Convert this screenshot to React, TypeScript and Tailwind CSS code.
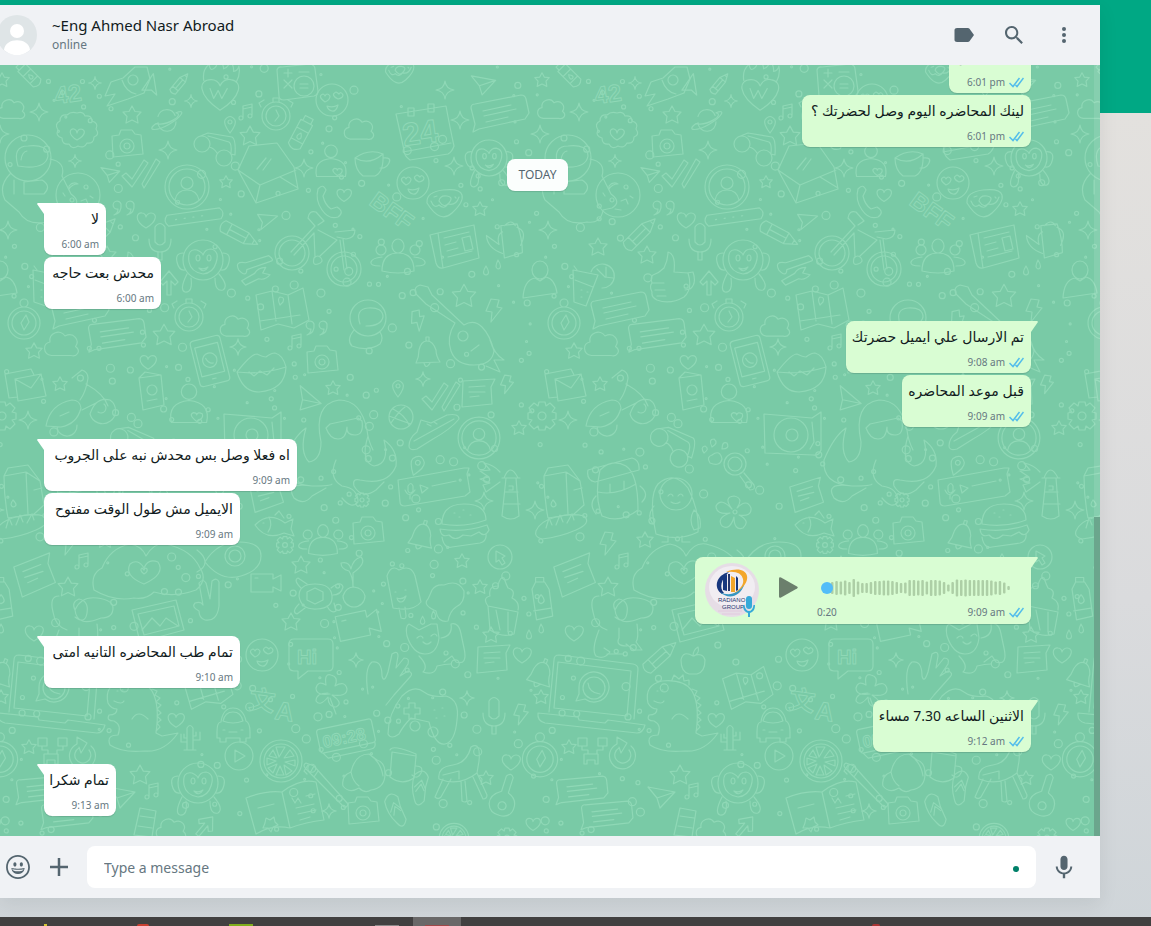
import React from 'react';

interface Message {
  id: number;
  text?: string;
  time: string;
  sent: boolean;
  tail?: boolean;
  width: string;
}

interface BubbleProps {
  message: Message;
  children?: React.ReactNode;
}

const earlier: Message[] = [
  { id: 1, text: 'مساء الخير', time: '6:01 pm', sent: true, width: 'w-[82px]' },
  { id: 2, text: 'لينك المحاضره اليوم وصل لحضرتك ؟', time: '6:01 pm', sent: true, width: 'w-[229px]' },
];

const today: Message[] = [
  { id: 3, text: 'لا', time: '6:00 am', sent: false, tail: true, width: 'w-[62px]' },
  { id: 4, text: 'محدش بعت حاجه', time: '6:00 am', sent: false, width: 'w-[117px]' },
  { id: 5, text: 'تم الارسال علي ايميل حضرتك', time: '9:08 am', sent: true, tail: true, width: 'w-[185px]' },
  { id: 6, text: 'قبل موعد المحاضره', time: '9:09 am', sent: true, width: 'w-[129px]' },
  { id: 7, text: 'اه فعلا وصل بس محدش نبه على الجروب', time: '9:09 am', sent: false, tail: true, width: 'w-[253px]' },
  { id: 8, text: 'الايميل مش طول الوقت مفتوح', time: '9:09 am', sent: false, width: 'w-[196px]' },
  { id: 9, time: '9:09 am', sent: true, tail: true, width: 'w-[336px]' },
  { id: 10, text: 'تمام طب المحاضره التانيه امتى', time: '9:10 am', sent: false, tail: true, width: 'w-[196px]' },
  { id: 11, text: 'الاثنين الساعه 7.30 مساء', time: '9:12 am', sent: true, tail: true, width: 'w-[158px]' },
  { id: 12, text: 'تمام شكرا', time: '9:13 am', sent: false, tail: true, width: 'w-[72px]' },
];

const shapes: Record<string, string> = {
  star: 'M0-9l3 5.500 6 .5-4 4.500 1 6.500-6-3-6 3 1-6.500-4-4.500 6-.5z',
  sparkle: 'M0-9q1 8 9 9q-8 1-9 9q-1-8-9-9q8-1 9-9z',
  heart: 'M0 8c-13-8-9-16-4-15 3 0 4 3 4 4 0-1 2-4 5-4 6 0 7 8-5 15z',
  heartW: 'M0 18c-26-18-24-34-10-34 6 0 9 4 10 7 2-4 6-8 12-7 14 2 12 19-12 34zM-11-6l4 11 5-9 4 9 6-11M-18-15q-2-12 6-18q1 9 6 4q4-3 2-10q8 4 8 11q6-2 7-9q5 6 4 12q5-1 6-6q2 9-3 18',
  cloud: 'M-9 7c-6-1-6-8-1-9-1-6 7-9 10-4 6-3 10 3 7 7 4 3 1 7-3 6z',
  planet: 'M-10-4a10 10 0 0 1 19-1M-10 3a10 10 0 0 0 20-1M-12 4c-12 8 0 9 14 1s20-18 8-13C20-6 0 7-12 4z',
  camera: 'M-15-8l7-1 2-5h11l3 4 6 1 2 19-30 3zM-7 2a7 7 0 1 0 14 0a7 7 0 1 0-14 0M-3 2a3 3 0 1 0 6 0a3 3 0 1 0-6 0',
  badge: 'M0-20q6-2 8 3q7-1 7 5q7 2 4 8q4 6-2 8q0 7-7 6q-3 6-9 3q-6 4-9-2q-7 1-7-6q-7-2-4-8q-4-6 2-9q0-7 7-6q4-4 10-2zM0 7c-10-6-7-12-3-11q3 1 3 4q1-4 4-4c5 1 5 6-4 11z',
  helmet: 'M-23 0a23 23 0 1 0 46 0a23 23 0 1 0-46 0M-10 8q-6-20 10-20q20-2 20 10q-2 12-22 11zM-7 2q1-8 6-9M-18 16q-12 12-5 26l14 12q8 14 28 10q14 2 16-12l9-2q10-6-1-14l-9-18q4-14-12-17M-4 24l18-2q10 6 2 14h-20zM-14 22v14',
  head: 'M-18 0a18 18 0 1 0 36 0a18 18 0 1 0-36 0M-8 6q-5-15 8-16q15-1 15 9q-2 9-17 9M-14 12q-8 10-2 16 16 6 28-2 4-6 0-12',
  ring: 'M-22 0a22 22 0 1 0 44 0a22 22 0 1 0-44 0M-18 0a18 18 0 1 0 36 0a18 18 0 1 0-36 0M-6-4a6 6 0 1 0 12 0a6 6 0 1 0-12 0M-12 13q2-10 12-10t12 10',
  cookie: 'M-22 0a22 22 0 1 0 44 0a22 22 0 1 0-44 0M-9-9q4-5 9-2q-6 0-9 5zM6-8a2 2 0 1 0 4 0a2 2 0 1 0-4 0M-8 5a2 2 0 1 0 4 0a2 2 0 1 0-4 0M3 6l5-2 2 5M-3 14l6 1M12 1l3 2M-15-2l2 3',
  glasses: 'M-20-4a8 8 0 1 0 16 0a8 8 0 1 0-16 0M2 10a8 8 0 1 0 16 0a8 8 0 1 0-16 0M-5-1q5 1 8 6M-16-11l10-4 24 4q4 2 3 18l-4-1M-6-12l21 6q3 2 2 11',
  pin: 'M0 9q-7-9-5-13q5-7 10 0q2 4-5 13zM-2-2a2 2 0 1 0 4 0a2 2 0 1 0-4 0',
  music: 'M-5 6v-12l9-2v11M-5-3l9-2M-9 6a2 2 0 1 0 4 0a2 2 0 1 0-4 0M0 4a2 2 0 1 0 4 0a2 2 0 1 0-4 0',
  watch: 'M-14 0a14 14 0 1 0 28 0a14 14 0 1 0-28 0M-10 0a10 10 0 1 0 20 0a10 10 0 1 0-20 0M-3-14v-4h6v4M-15-9l-2-4 5-3M15-9l2-4-5-3M0-6l3 6-4 5',
  emoji: 'M-16 0a16 16 0 1 0 32 0a16 16 0 1 0-32 0M-7 2q-8-6-2-8q2 1 2 2q2-4 5 0q0 4-5 6zM6-1q-8-4-2-7q2 1 3 2q2-3 4 1q0 3-5 4zM-5 6q6 2 11-1q-2 7-6 6t-5-5z',
  calc: 'M-19-12q1-4 5-3l28-3q5 1 5 5l3 22q0 4-4 5l-30 4q-5 0-5-4zM-12-2l8 8M-4-2l-8 8M-12-9h8M-8-13v8M3-10h10M-2 4a10 10 0 1 0 20 0a10 10 0 1 0-20 0M4 2h8M4 6h8',
  tube: 'M-6-13h12v24q-6 6-12 0zM-6-5h12M-6 6h12M-4-13v-5h8v5M0-2q-4 5 0 6q4-1 0-6z',
  envelope: 'M-27-2l11-24 28-3 17 24 4 22-42 14zM-27-2l22 15 36-15M-9 30l4-17M33 16l-18-11M-8-3l9-11M-2-2l8-11',
  person: 'M-7-13a7 7 0 1 0 14 0a7 7 0 1 0-14 0M-16 15q-4-18 16-20q20 2 16 20zM7 14q-8-6-3-8q3 0 3 2q1-3 5-1q2 4-5 7z',
  phone: 'M-13-11q5-6 8 1l-3 6q2 9 8 13l6-2q8 5 1 10q-9 3-16-7t-4-21z',
  cup: 'M-15-6q14-10 28-4q1 18-8 22h-12q-8-6-8-18zM-15-6q14 8 28-4M13-6q9-1 6 5t-9 5',
  plane: 'M-13-9l27 5-15 16-3-10zM-4 2l18-6',
  arrow: 'M-13-7l25 2-21 17 2-9z',
  checks: 'M-18 1l4-3 6 6 12-19 4 3-16 24zM2 9l14-25 4 3L4 13z',
  quotes: 'M-4-4a4 4 0 1 0-3 5q0 4-4 6q8-2 7-11M9-4a4 4 0 1 0-3 5q0 4-4 6q8-2 7-11',
  bar: 'M-24-5h48q5 5 0 10h-48q-5-5 0-10zM-17 0h1M-9 0h1M-1 0h1M7 0h1',
  pencil: 'M-19-6h26l13 6-13 6h-26q-5-6 0-12zM-12-6v12M7-6v12M-12 0h19M15-2v4',
  mic: 'M-5-13q5-7 10 0v15q-5 6-10 0zM-11-1q0 13 11 13t11-13M-2 12v8h4v-8',
  monkey: 'M-20 0a20 20 0 1 0 40 0a20 20 0 1 0-40 0M-20-7q-8 0-6 9t8 8M20-7q8 0 6 9t-8 8M-14 2q-2-14 8-12q6 3 6 5q2-6 8-6q9 2 5 14q-3 10-13 11q-12-2-14-12zM-7-2a2 3 0 1 0 4 0a2 3 0 1 0-4 0M4-2a2 3 0 1 0 4 0a2 3 0 1 0-4 0M-4 8q5 2 9-1q-4 7-9 1M-16 14q-8 16-2 18q8 1 6-14M16 14q10 12 4 16q-8 2-8-12',
  spoon: 'M-18 3q-3-10 8-6l24-3q6 6 0 6l-24 4q-2 8-8-1zM-17 14l14-5q4-5 12-4l-4 5 7 3q-6 5-12 2l-14 4z',
  bike: 'M-43 7a17 17 0 1 0 34 0a17 17 0 1 0-34 0M-39 7a13 13 0 1 0 26 0a13 13 0 1 0-26 0M9 23a17 17 0 1 0 34 0a17 17 0 1 0-34 0M13 23a13 13 0 1 0 26 0a13 13 0 1 0-26 0M-27 6L-3-20l-7-8q1-8 8-6l8 9-6 4M-24 9L-4-13l1 24M0-16L19-6l-17 16M22-6l4 30M25-7l4 30M17-14l20-2q0 8-9 9l-9-2M-4 12q4-4 7 0t-3 6-4-6',
  donut: 'M-18 0q-1-11 16-13t19 5-10 18-25-10zM-6-2q1-6 8-5t2 7-10-2M-14-2q3 8 8 4q5 5 9-1q8 2 11-7M-11-6l3-1M10-6l1 1',
  news: 'M-18-12l36-8 5 33-36 10zM-18-12l-8 2 6 28q2 6 7 5M-12-7l25-6M-11 0l11-3M-9 6l11-3M-8 12l24-6M6-7l8-2 3 13-8 2z',
  can: 'M-8-16l18-2q6 16 6 32l-20 6zM-6-9q-7 3-4 14l-14-10q1 14 18 20M10-14q12 4 4 20M-4-16q8-8 12 0',
  people: 'M-6-10a6 7 0 1 0 12 0a6 7 0 1 0-12 0M-16 15q0-18 16-18t16 18q-16 4-32 0M-22-6a5 5 0 1 0 10 0a5 5 0 1 0-10 0M12-6a5 5 0 1 0 10 0a5 5 0 1 0-10 0M-18 10q-10 0-9-4t11-5M18 10q10 0 9-4t-11-5',
  guitar: 'M-40-38q-3-7 4-9l8 2 4 8L8-7q10-6 18 2t12 24q-2 14-20 14t-23-14 4-28L-30-28zM2 4a5 5 0 1 0 10 0a5 5 0 1 0-10 0M15 19l8-6M34 8q4 14 14 20l-10 0 6 12-14-6',
  ukulele: 'M-3-22q4-5 7 0l-1 16q10 4 9 14t-12 10-13-9 9-15zM-4 8a4 4 0 1 0 8 0a4 4 0 1 0-8 0',
  bolt: 'M-3-11l8 1-2 7 5 1-11 14 1-10-6-1z',
  bell: 'M-11 9q3-6 3-13 2-9 8-9t9 9q0 6 4 12l-24 1M-3 9q2 7 6 0M-1-13v-4h3v4',
  calendar: 'M-26-18l50-8q4 22 8 40-2 6-6 8l-38 6q-6-4-6-10zM-14-24h6v8h-6zM6-28h6v8h-6zM-19 20l48-9',
  bubble: 'M-24-10l46-9q4 0 5 4l3 14-4 6-46 10-6 3 2-8-4-16q0-4 4-4zM-16-3l28-6M-15 2l32-7M-13 8l22-5',
  note: 'M-15-11l32-2-4 8 1 17-30 3zM-9-5l16-1M-9 0h16M-8 5l9-1',
  thumb: 'M-16 0q6-2 11-7 4-8 4-16 8 2 6 20l14 1q5 16-4 24-14 8-27 3-6-3-5-8 -3-6 0-9-2-6 1-8zM-17 8h12M-14 15h10M-12 21h9M18-2l6-1q4 12-3 17l-5 1',
  drink: 'M-16-12l25 5-12 31-12-4zM-14-2l18 7M-12-12l-3-4M2-10a12 12 0 1 1 11 16M8-13l8 8M17-15v10M24-4l-8-1M-8 8h1M-2 10h1M-8 15h1',
  user: 'M-8-12a8 9 0 1 0 16 0a8 9 0 1 0-16 0M-17 16q1-18 12-20l5 3 6-4q9 2 11 16z',
  compass: 'M-16 2a16 16 0 1 0 32 0a16 16 0 1 0-32 0M-12 2a12 12 0 1 0 24 0a12 12 0 1 0-24 0M-4-18a4 4 0 1 0 8 0a4 4 0 1 0-8 0M2-6l3 7-5 8-3-7z',
  uparrow: 'M-9-1l9-11 9 11-3 3-4-4v14h-4v-14l-4 4z',
  tablet: 'M-17-22q0-4 4-4h26q4 0 4 4v44q0 4-4 4h-26q-4 0-4-4zM-13-18h26v33h-26zM-8-1a8 8 0 1 0 16 0a8 8 0 1 0-16 0M-4-4q2 7 7 7M-2 20h4',
  map: 'M-24-16l16-4 16 4 15-7 6 32-15 8-16-4-17 6zM-8-20l4 30M8-16l4 29M0-6q-3-6 0-8q5 0 3 5zM-20 10l40-6',
  lips: 'M-26 2q14-18 20-18 6 3 9 3 5-4 9-4 8 2 11 14-25 8-49 5zM-26 2q6 20 22 20 26-2 27-25M-14 2l5 4 6-5 7 4 7-7',
  mail: 'M-20-12l26-5 3 6M-20-12l4 24 8-1M-10-7l26-5 5 22-28 5zM-10-7l16 9 10-14',
  rocket: 'M-28 18q4-22 26-26 8 0 9 8-4 16-20 19zM-14 8l9-4M-17 19a10 10 0 0 0 20-2M8 2l14-7M-2-30l10-8q6 2 6 8-2 14-8 22M12-24q18 10 22 22M16 6a13 13 0 1 0 20-14q-14-4-20 14M24 4a5 5 0 1 0 6-8',
  shuttle: 'M-17 18l8-12-10 2 6-14 12-4 12-11 12 0 3 12-6 14-16 6zM-2-8q4 12 14 14M4-8a5 5 0 1 0 10 0a5 5 0 1 0-10 0',
  passport: 'M-12-14l22-3 3 30-21 5zM-12-14l6-6 16 3M-4-2a5 5 0 1 0 10 0a5 5 0 1 0-10 0M-4 9l10-2',
  gear: 'M-3-14h6l1 4 4-3 5 5-3 4 4 1v6l-4 1 3 4-5 5-4-3-1 4h-6l-1-4-4 3-5-5 3-4-4-1v-6l4-1-3-4 5-5 4 3zM-4 0a4 4 0 1 0 8 0a4 4 0 1 0-8 0',
  turntable: 'M-28-18l48 4 9-6 0 38q-2 6-8 5l-48-2zM-18 3a17 17 0 1 0 34 0a17 17 0 1 0-34 0M-6 3a6 6 0 1 0 12 0a6 6 0 1 0-12 0M20-10l2 20-4 7',
  octopus: 'M-21-4q-8-38 18-42 22 0 28 30 1 10 6 20M-16-18l4-4 28-6 4 3q2 14-7 14t-8-8q-1 12-9 12t-12-11zM-21-4q0 18-12 20-10-10-3-34-12 8-22 32-2 24 28 26 20 0 20-2M26-10q-8 26 6 30 16-2 10-26 14 10 12 26-8 20-36 14-8-2-6 6 8 14 22 4l8-8M-30 40q-28-4-18 12 10 8 18-2l14-8M-6 14q-8 18 6 26 16 2 16 16-6 8-16-4',
  lighthouse: 'M-8 26l4-38h10l3 38q-8 6-17 0zM-6 14h16M-5 2h13M-6-12q6-16 14 0M-8-12h18M-1-4h4v4h-4M-10-8l-14 10-3-7 7-2-10-4 9-2-9-6 10-1-6-7q10 2 16 9',
  voice: 'M-36-10l66-12 5 0-2 6 3 18-5 4-60 10q-5 0-5-4zM-26-4q3-5 5 0v5q-3 4-5 0zM-29 0q4 9 10 0M-24 5v4M-14-5l8 3-6 5zM-2-4l24-5',
  burger: 'M-23-2q0-20 22-20t22 16q-22 8-44 4zM-25 3q24 4 47-4l2 5q-4 8-10 2l-8 4-8-1q-8 7-14 0-8 3-9-6zM-23 11q2 12 10 10l28-4q7-2 6-9M-11-13h1M-2-16h1M5-11h1M-6-9h1',
  milk: 'M-18-12l22-4 14 9 4 24-10 9-26 4q-4-20-4-42zM-18-12l4-8 20-3 12 16M4-16l2 42M-9 12q-4 5 0 7 6-1 0-7zM12 2l8-2',
  bread: 'M-26 6q4-10 20-14t28-1q8 7-8 14t-34 9q-8-2-6-8zM-16 3l3-10 3 7M-6 0l4-10 3 7M5-2l5-9 2 6',
  cursor: 'M-12 0a12 12 0 1 0 24 0a12 12 0 1 0-24 0M-4-6l9 5-3 2 3 5-3 2-3-5-3 2z',
  shoe: 'M-25 12q0-8 8-14l4-12 10 3 16-8q12-2 12 4-8 10-26 20l-16 10q-8 2-8-3zM-20 7l40-22M-7-10l4 2M0-12l3 2',
  ball: 'M-12 0a12 12 0 1 0 24 0a12 12 0 1 0-24 0M-8-8q12 6 16 16M-10 6q8-12 14-16M-12-1q10 4 22 8',
  backpack: 'M-16-16q12-12 26-4 12 8 12 44-18 14-36 6-8-20-2-46zM-28-16l44-12q8 2 7 12l-44 12q-9-2-7-12zM-18 6q18 4 38-8M-20 10q-8 8 0 18M24 0q10 8 2 16M-6-2v8M8-5v8',
  penguin: 'M-20 26q-8-38 2-50 16-14 30 4 12 24 10 44-20 10-42 2zM-16-14a16 16 0 1 0 32 0a16 16 0 1 0-32 0M-8-12q3-4 5 0M2-12q3-4 5 0M-5-6q5 3 9 0M-22-2q-8 10-1 18M18 2q8 6 6 18l-6 2q-6-10 0-20M-8 28v6h-6M6 28v6h8',
  paw: 'M-4 0q8-6 10 4-2 8-12 4-4-6 2-8zM-12-2q-4-6 1-7 5 3-1 7zM-4-8q-4-8 2-8 5 4-2 8zM6-6q0-8 5-6 3 6-5 6z',
  loupe: 'M-10-6a11 11 0 1 0 22 0a11 11 0 1 0-22 0M-6-6a7 7 0 1 0 14 0a7 7 0 1 0-14 0M6 6l10 14q6 0 4-5L10 3',
  flower: 'M-3-3q-9-12 2-13 10 2 3 12 10-10 14 0 1 9-12 7 12 6 4 13-9 3-9-11-4 14-12 9-6-8 8-13-14 2-14-7 5-9 16 3M-2 0a2 2 0 1 0 4 0a2 2 0 1 0-4 0',
  hands: 'M-50 20q-4-16 8-22 8-20 28-24 12 2 16 12 8-14 20-12 26 6 34 24 8 12-4 22-22 8-42 2-8 8-20 6-20 4-40-8zM0 14q-20-8-14-20 8-6 14 4 4-10 14-6 8 12-14 22zM0 4q-5-4-2-6 2 2 2 2 1-3 3-1 1 3-3 5z',
  cupcake: 'M-16-2l30 6-4 22q-12 4-24-4zM-16-2q-6-8 2-10-2-10 8-10 2-10 6-8 2 6 4 10 8 2 4 10 8 4 6 12M-8 2l4 20M4 4v20',
  bottle: 'M-10-12l4-8h10l5 8 4 30-18 4zM-6-20v-5h9v5M0-6q-6 8 0 10 7-2 0-10zM-8 12l19-3',
  dog: 'M-4-16q6-14 22-12 16 2 16 10 0 10-12 10-24 10-26-8zM-4-16q-4-8 4-11 10 2 8 14t-12 4M-20-30q-10 0-6 16 2 14 14 18M-20 4q-8 20-3 26 8 4 14-4l-6-4M0 2v10q-4 8 8 8M18-2q2 14-1 18l6 8h-8l-8-6M-12 28h16',
  cat: 'M-22-14q-2-10 2-12l10 6 12-6 6 0 2 14q-2 16-14 16t-18-18zM-12-12q4-4 6 0M2-14q4-4 6 0M-6-8q4 4 8 0M12-12q12-2 10-14 8-2 10 10l3 14q4 18-8 14l-4-6-8 6M-10 6q10 10 4 16 12 4 14-6 8-2 14-2',
  icecream: 'M-16-12q4-12 12-6 12-6 16 6l6 26q-8 10-28 6zM-8 4h1M2 2h1M-6 10q5 2 9-2-2 6-5 6t-4-4M-4 20l2 10q5 2 5-2l-1-9',
  splat: 'M-12-10q4-6 12-5 14-6 20 6 1 12-8 16-6 4-8 14-10 2-12-10-14-6-8-12 2-4 4-9z',
  fish: 'M-18 2q14-14 30-2l8-4-2 10 3 7-10-3q-18 8-29-8zM-10 0h1M-4-6q4 8-1 15M2-8l4-4 5 7',
  eyeplane: 'M-28 4q12-20 34-20t22 14-20 20-36-14zM-8-2a10 10 0 1 0 20 0a10 10 0 1 0-20 0M-4-2a6 6 0 1 0 12 0a6 6 0 1 0-12 0M-36-8q8 6 8 12t-8 10',
  cherry: 'M-12 8a10 10 0 1 0 22 0q-2-8-11-9-8 0-11 9zM-2-1q0-10-4-16-8-2-8-8 8-2 10 6 2-10 10-12 6 6-8 16v14',
  turtle: 'M-16 2q0-12 16-12t17 12-15 13-18-13zM-8-2l8-4 8 4v8l-8 4-8-4zM16-6q10-8 12-1-2 8-10 8M-16 10q-8 8-2 10l8-6M12 12q4 8 9 5l-2-8M-14-6q-8-8-3-10l9 6',
  peace: 'M-12 6q-8-4-4-8 6-2 8 2l-4-22q4-5 7 0l4 16 2-18q5-4 7 1v24q-2 16-14 14-6-2-6-9z',
  video: 'M-14-9h22v5l8-4v16l-8-4v5h-22zM-10-5h3',
  hi: 'M-22-12q0-5 5-5h34q5 0 5 5v22q0 5-5 5h-20l-10 8v-8h-4q-5 0-5-5z',
  laptop: 'M-40-28q0-5 5-5l74 9q5 1 5 5l-4 50M-40-28l-5 52M-36-26l73 9-4 45-73-8zM-56 25l40 4 1 3 26 3 3-3 37 5q-2 8-8 8l-92-10q-8-2-7-10zM-15-1a15 15 0 1 1 6 12l-9 2 3-7zM-11 0a11 11 0 1 0 22 0a11 11 0 1 0-22 0M-6-5q1 10 12 11',
  dino: 'M-30-12q-4-18 14-22 22-2 30 10 8 14 4 42l6 3 16-3q-14 20-34 18-22 2-34-6-4-10 8-10 4-10-4-14-8 0-5-6 8 0 8-6-6 0-9-6zM-21-24h1M-16-25h1M-24-14q8 4 10 0M14-26l5 2-2 4 5 3-4 4 5 3-4 4 4 4-4 3 4 4-4 3 3 4-4 4M-6 4q6-10 16 0M-6-35l2-5 5 4 4-4 1 6 5-1 0 5',
  pad: 'M-34 16q0-20 14-38 12-12 22-4 8 6 22 4 14 4 11 24-2 22-12 24t-16-22l-18-4q-8 8-12 16-8 6-11 0zM-18-10h5v-5h6v5h5v6h-5v5h-6v-5h-5zM-12 8a5 5 0 1 0 10 0a5 5 0 1 0-10 0M6 14a5 5 0 1 0 10 0a5 5 0 1 0-10 0M12-8h1M20-10h1M14 0h1M22-2h1',
  chair: 'M-20 8q-2-12 14-14 14-2 18-18 10-6 8 14l-2 12q-18 14-38 6zM-16 8l-8 18q3 3 6 0l10-18M2 10l1 20q3 2 5 0l-2-20M14 6l10 22q4 0 4-4L18 2M-16 4l16-4v8',
  mug: 'M-12-10l24 4-2 22q-12 8-24-1zM-14-12q2-6 26 4l0 4M12 4q8 0 5 7t-9 2',
  sandal: 'M-8-14q8-10 14 0l-1 10 1 14q-6 10-10 0-6-12-4-24zM-6-2l6-8 5 8M-4 2l4-8 4 6',
  clover: 'M0 0q-14 2-14-6 2-8 10-3-2-12 5-10 8 2 4 11 10-6 12 3 0 8-15 6 12 8 4 12-8 0-8-10-8 10-12 4 0-8 12-8M0 4l6 16',
  car: 'M-16 6q0-10 4-10 2-14 12-14t13 13q4 2 4 11v6h-4v4h-6v-4h-14v4h-6v-4h-3zM-10-5q10 4 20 0-2-9-10-9t-10 9zM-10 4h2M8 4h2M-4 6h8',
  play: 'M-14 0a14 14 0 1 0 28 0a14 14 0 1 0-28 0M-4-6l10 6-10 6z',
  orange: 'M-21 0a21 21 0 1 0 42 0a21 21 0 1 0-42 0M-17 0a17 17 0 1 0 34 0a17 17 0 1 0-34 0M-2-4l-3-10h9zM3-3l6-8 4 6zM4 1l10-2v6zM3 4l8 6-6 4zM-1 5l4 9h-8zM-4 3l-4 9-5-5zM-5 0l-9 4v-7zM-4-3l-8-2 4-6z',
  clock: 'M-25-12h50q3 0 3 3v18q0 3-3 3h-50q-3 0-3-3v-18q0-3 3-3zM-26 12l4 6h44q5 0 5-6',
  cactus: 'M-3 12v-22q3-5 6 0v22zM-3 4h-6v-8M-6-4v4h3M3 2h7v-8M6-6v4h-3M-6 12h12',
  book: 'M-38-12q20-8 36-6 18-14 34-10l8 38q-18 2-34 8-18-4-34 6zM-2-18l8 36M-26-2l16-4M-18 8l4 2 4-3 1 5 3 3-5 2-2 5-3-4h-5l2-5zM8-12l3 5 3-5 3 5M22-14l9-2M12-2l18-4M14 4l18-4M16 10l10-3',
  brush: 'M-20-16q-4-4 0-6l8 3 34 38q-1 4-4 3zM-18-20l-4 6 3 3M-12-19l-4 7M-8-14l-4 6',
  croissant: 'M-20 16q-2-10 8-14 4-18 18-18l8 6q8 2 8 14 0 14-14 16-6 4-12-2-10 6-16-2zM-12 2q2 10 8 14M6-16q12 8 14 22',
  apple: 'M0-8q-10-6-12 4 0 12 8 14h8q8-2 8-14-2-8-12-4zM0-8q0-6 5-9 2 6-4 9',
  sock: 'M-8-14l16 3-4 26-18-2zM-8-6l14 2M-10 4l14 2',
  reload: 'M8-9a13 13 0 1 1-14-2M-6-11v-7l10 6-6 10-2-6M6-5a8 8 0 1 1-10-2',
  flow: 'M-16-12h9v8h-9zM4-12h9v8h-9zM-10 4h14v10h-3v-4h-8v4h-3zM-12-4v4h6v4M9-4v4h-6v4',
  drops: 'M-6-2q-5 8 0 9 5-1 0-9zM6-8q-4 8 0 9 5-1 0-9z',
  photo: 'M-26-12l44-10 8 30-44 12zM-20-8l36-8 5 20-35 9zM-16 8l10-12 8 8 6-8 12 8',
  hand: 'M-18 18q-4-26 4-32 10-2 10 14 2 8 6-4l4-18q6-4 6 2l-2 12 8-10q6 0 4 6l-8 12 8-5q6 2 2 6l-16 18-8 10',
};

type Placement = [name: string, x: number, y: number, scale?: number, rotate?: number];

const placements: Placement[] = [
  ['star', 2, 80, 0.8], ['tube', 30, 76, 0.9, -45], ['sparkle', 95, 83, 0.7], ['shuttle', 124, 88],
  ['arrow', 152, 84, 0.8, -60], ['pencil', 180, 83, 0.6, -50], ['sparkle', 191, 101, 0.7], ['heartW', 220, 94, 0.9],
  ['star', 132, 115], ['planet', 167, 120, 0.9], ['camera', 127, 144], ['badge', 77, 133], ['cloud', 14, 110, 1.2],
  ['sparkle', 39, 112], ['helmet', 28, 158], ['glasses', 214, 148], ['pin', 230, 124], ['music', 248, 112],
  ['watch', 276, 116], ['star', 250, 136, 1.1], ['emoji', 332, 100], ['calc', 296, 82], ['tube', 300, 135, 1.1, 28],
  ['cloud', 362, 130, 1.3], ['envelope', 265, 172], ['sparkle', 304, 168], ['person', 331, 163, 0.9], ['phone', 331, 200],
  ['heart', 344, 195, 0.8], ['cup', 370, 164], ['sparkle', 168, 150], ['sparkle', 75, 161, 0.7], ['plane', 110, 174, 0.7],
  ['checks', 140, 175], ['ring', 187, 187], ['star', 226, 182, 0.7], ['cookie', 78, 195], ['quotes', 125, 208],
  ['heart', 146, 220], ['bar', 194, 217, 1.1, -8], ['pencil', 240, 235, 1, 28], ['arrow', 268, 220, 0.8],
  ['mic', 160, 240], ['monkey', 203, 260], ['spoon', 256, 264, 1, -10], ['bike', 318, 246], ['sparkle', 8, 230],
  ['emoji', 413, 183], ['donut', 445, 203], ['monkey', 489, 158, 0.9], ['news', 456, 245], ['can', 508, 240, 0.9],
  ['people', 398, 256], ['star', 480, 209, 0.8], ['star', 464, 296, 1.3], ['guitar', 456, 332], ['bolt', 494, 310],
  ['bolt', 418, 320, 0.9, -20], ['bell', 427, 354], ['calendar', 422, 132], ['bubble', 499, 114], ['donut', 400, 72, 0.8],
  ['plane', 483, 84, 0.9], ['sparkle', 445, 90], ['sparkle', 460, 120], ['sparkle', 454, 166], ['sparkle', 540, 134],
  ['pencil', 101, 233, 1, -45], ['star', 58, 247], ['star', 107, 255], ['thumb', 129, 275], ['drink', 49, 282],
  ['user', 0, 282], ['compass', 24, 321], ['uparrow', 169, 283], ['bubble', 79, 311], ['bubble', 116, 336, 1, 4],
  ['star', 164, 335, 1.2], ['watch', 189, 317], ['cloud', 65, 345, 1.5], ['tablet', 210, 361, 0.9, -14], ['map', 280, 311],
  ['head', 368, 318], ['cloud', 238, 327, 1.3], ['sparkle', 238, 347, 0.9], ['lips', 263, 370], ['camera', 322, 360],
  ['music', 297, 342], ['quotes', 318, 328], ['star', 34, 351, 0.9], ['mail', 25, 386], ['star', 60, 384, 0.8],
  ['rocket', 74, 408], ['passport', 151, 392], ['person', 189, 406, 1.1], ['plane', 307, 400, 1, 30], ['star', 333, 388, 0.8],
  ['gear', 2, 416], ['sparkle', 28, 420], ['turntable', 252, 432], ['octopus', 342, 446], ['sparkle', 423, 379, 0.8],
  ['heart', 148, 362, 0.9], ['checks', 440, 398], ['note', 478, 392], ['bolt', 507, 384, 0.8], ['pin', 398, 388],
  ['shoe', 434, 434], ['ball', 401, 417], ['ring', 479, 438, 0.95], ['star', 519, 428, 0.8], ['milk', 22, 488],
  ['bread', 22, 525], ['lighthouse', 510, 490], ['voice', 434, 490], ['burger', 465, 526], ['bell', 421, 537, 1, 15],
  ['cursor', 500, 557], ['pin', 417, 465, 1.2, 20], ['sparkle', 484, 501], ['sparkle', 535, 510], ['backpack', 76, 486],
  ['penguin', 136, 508], ['glasses', 131, 445, 1.1, 14], ['paw', 176, 455], ['loupe', 194, 470], ['flower', 195, 512],
  ['hands', 144, 570], ['star', 68, 587, 1.1], ['note', 35, 574, 1.2, -18], ['cupcake', 504, 608], ['bottle', 1, 600, 0.9],
  ['dog', 79, 626], ['cat', 429, 650], ['icecream', 403, 588], ['splat', 444, 600], ['fish', 273, 523],
  ['people', 323, 540, 0.9], ['camera', 368, 531], ['gear', 285, 545, 0.6], ['eyeplane', 233, 558], ['cherry', 355, 588],
  ['turtle', 315, 594], ['peace', 211, 605], ['video', 265, 583], ['star', 301, 565, 1], ['note', 267, 494, 1, -14],
  ['gear', 362, 500, 0.5], ['star', 462, 561, 0.8], ['star', 480, 587, 0.8], ['bolt', 68, 543], ['star', 105, 540, 0.9],
  ['music', 84, 561], ['photo', 158, 622], ['emoji', 262, 655], ['hi', 311, 656], ['video', 357, 625, 1.4, -12],
  ['star', 291, 622, 1], ['note', 493, 658], ['heart', 522, 655], ['heart', 34, 633], ['bell', 0, 675, 1, 20],
  ['star', 1, 697, 0.8], ['laptop', 54, 688], ['dino', 138, 715], ['pad', 422, 718], ['mic', 494, 714],
  ['compass', 0, 757, 1.1], ['chair', 459, 771], ['mug', 404, 762], ['sandal', 420, 790, 1, 10],
  ['sandal', 397, 812, 1, -20], ['ukulele', 504, 798, 1, 14], ['bubble', 41, 791, 0.9, 6], ['bubble', 66, 816, 0.9, 6],
  ['plane', 121, 796], ['clover', 330, 694], ['car', 233, 726], ['play', 239, 756], ['orange', 281, 761],
  ['clock', 346, 736, 1, -12], ['cactus', 190, 738], ['monkey', 198, 783], ['book', 284, 810], ['brush', 326, 785],
  ['camera', 363, 811], ['croissant', 363, 770], ['pencil', 121, 656, 1, -42], ['apple', 153, 664],
  ['map', 206, 690, 0.9, -8], ['heart', 176, 720, 0.9], ['star', 140, 775, 1.1], ['music', 154, 791], ['star', 29, 747, 0.8],
  ['flow', 54, 750], ['reload', 83, 755], ['bolt', 521, 714, 0.9], ['heart', 511, 762], ['star', 486, 778, 0.8],
  ['sock', 148, 822], ['cloud', 174, 830, 1.3], ['hand', 386, 676], ['drops', 535, 632], ['drops', 428, 618, 0.9],
  ['drops', 492, 268], ['orange', 454, 838, 0.7], ['gear', 507, 838, 0.7], ['heart', 533, 824, 0.8], ['sparkle', 329, 811, 0.8],
  ['sparkle', 356, 660, 0.8], ['sparkle', 467, 698, 0.8], ['star', 491, 635, 0.9], ['uparrow', 205, 826, 1, 40],
];

const lettering = [
  { text: '42', x: 56, y: 104, size: 24, rotate: -8 },
  { text: '24', x: 404, y: 146, size: 32, rotate: -8 },
  { text: 'BFF', x: 368, y: 204, size: 24, rotate: 36 },
  { text: 'Hi', x: 297, y: 664, size: 20, rotate: 0 },
  { text: '文', x: 248, y: 708, size: 26, rotate: 8 },
  { text: 'A', x: 274, y: 719, size: 26, rotate: 8 },
  { text: '09:28', x: 324, y: 748, size: 17, rotate: -12 },
];

// small circles that fill the gaps between the doodles
function scatterDots() {
  const dots: { x: number; y: number; r: number }[] = [];
  let seed = 7;
  const next = () => {
    seed = (seed * 16807) % 2147483647;
    return seed / 2147483647;
  };
  for (let i = 0; i < 2600 && dots.length < 400; i++) {
    const x = next() * 540;
    const y = 66 + next() * 770;
    const r = [1, 2, 2, 3, 4][Math.floor(next() * 5)];
    const blocked =
      placements.some(([, px, py, scale = 1]) => Math.hypot(px - x, py - y) < 15 * scale + r) ||
      dots.some((d) => Math.hypot(d.x - x, d.y - y) < 9);
    if (!blocked) dots.push({ x, y, r });
  }
  return dots;
}

const dots = scatterDots();

const Wallpaper: React.FC = () => (
  <svg className="absolute inset-0 h-full w-full" aria-hidden="true">
    <defs>
      <g id="doodles" fill="none" stroke="#8fd8b6" strokeWidth="1.2" strokeLinejoin="round" strokeLinecap="round">
        {placements.map(([name, x, y, scale = 1, rotate = 0], i) => (
          <path
            key={i}
            d={shapes[name]}
            transform={`translate(${x} ${y - 65}) rotate(${rotate}) scale(${scale})`}
            vectorEffect="non-scaling-stroke"
          />
        ))}
        {dots.map((dot, i) => (
          <circle key={i} cx={dot.x} cy={dot.y - 65} r={dot.r} />
        ))}
        {lettering.map(({ text, x, y, size, rotate }) => (
          <text
            key={text}
            fontSize={size}
            fontWeight="700"
            strokeWidth="1"
            fontFamily="'Liberation Sans', 'Noto Sans CJK SC', sans-serif"
            transform={`translate(${x} ${y - 65}) rotate(${rotate})`}
          >
            {text}
          </text>
        ))}
      </g>
    </defs>
    <use href="#doodles" x="-540" />
    <use href="#doodles" />
    <use href="#doodles" x="540" />
    <use href="#doodles" x="1080" />
  </svg>
);

const Ticks: React.FC = () => (
  <svg width="15" height="11" viewBox="0 0 15 11" fill="none" stroke="#53bdeb" strokeWidth="1.5" aria-label="Read">
    <path d="M.5 6l3.500 3.500L10.500 1M6.500 8l1.500 1.500L14.500 1" />
  </svg>
);

const Meta: React.FC<{ message: Message }> = ({ message }) => (
  <div className="flex items-center justify-end gap-1 text-[10px] leading-[15px] text-[#667781]">
    <span>{message.time}</span>
    {message.sent && <Ticks />}
  </div>
);

const Bubble: React.FC<BubbleProps> = ({ message, children }) => (
  <div
    className={`relative rounded-lg pr-[7px] pb-[3px] pl-[9px] shadow-[0_1px_1px_rgba(11,20,26,0.15)] ${message.width} ${
      message.sent ? 'self-end bg-[#d9fdd3]' : 'self-start bg-white'
    } ${message.tail ? 'mt-3' : 'mt-[2px]'}`}
  >
    {message.tail && (
      <svg
        className={`absolute top-0 ${message.sent ? '-right-[7px] -scale-x-100 text-[#d9fdd3]' : '-left-[7px] text-white'}`}
        width="16"
        height="11"
        viewBox="0 0 16 11"
        fill="currentColor"
        aria-hidden="true"
      >
        <path d="M1 0h15v11H7L.4 1.600Q-.2.2 1 0z" />
      </svg>
    )}
    {children}
    {message.text && (
      <p dir="rtl" className="relative mb-[9px] pt-[6px] text-[14px] leading-[19px] whitespace-nowrap text-[#111b21]">
        {message.text}
      </p>
    )}
    {message.text && <Meta message={message} />}
  </div>
);

const bars = [
  12, 14, 13, 15, 12, 18, 13, 10, 10, 12, 14, 14, 15, 15, 14, 12, 10, 11, 16, 16, 15, 16, 13, 16, 16, 15, 12, 7, 12, 17,
  16, 17, 16, 16, 16, 16, 16, 15, 13, 14, 11, 4,
];

const VoiceNote: React.FC<{ message: Message }> = ({ message }) => (
  <div className="relative flex h-16 items-start pt-[6px]">
    <svg className="ml-px shrink-0" width="56" height="56" viewBox="0 0 56 56" aria-label="Radiano Group">
      <circle cx="27" cy="27" r="27" fill="#e6dde6" />
      <ellipse cx="27" cy="24" rx="23" ry="21" fill="#f1edf2" />
      <path d="M13 48h24M17 51h18" stroke="#e4cfe1" strokeWidth="1.5" />
      <path d="M24 9C11 12 8 25 17 31l2-1c-5-5-3-14 5-21z" fill="#17377e" />
      <path d="M21 9c19-8 29 5 14 18q-4 4-9 5 14-8 12-16-2-9-17-7z" fill="#f3a62b" />
      <path d="M15 29c9 5 19 1 24-7-4 12-16 15-24 7z" fill="#3696c2" />
      <path d="M18 14l4-3v17l-4-1zM31 13l2 2v12l-2 1z" fill="#17377e" />
      <path d="M23 11h2v17h-2z" fill="#27376e" />
      <path d="M26 13l4 2v14h-4z" fill="#f3a62b" />
      <text x="13" y="39" fontSize="6" fill="#27376e" fontFamily="'Liberation Sans', sans-serif">RADIANO</text>
      <text x="17" y="46" fontSize="6" fill="#27376e" fontFamily="'Liberation Sans', sans-serif">GROUP</text>
      <g fill="#36a9d8">
        <rect x="41" y="33" width="6" height="13" rx="3" />
        <path d="M38 42h1.500c1 8 8 8 9 0H50c0 5-2 7-5 8v4h-2v-4c-3-1-5-3-5-8z" />
      </g>
    </svg>
    <button type="button" aria-label="Play voice message" className="ml-[18px] mt-[14px] shrink-0 cursor-pointer">
      <svg width="19" height="21" viewBox="0 0 19 21" fill="#6b7f6c" aria-hidden="true">
        <path d="M0 1.500Q.2-.5 2 .5l16 9q1.500 1 0 2l-16 9q-1.800 1-2-1z" />
      </svg>
    </button>
    <div className="ml-[19px] flex-1 pt-[14px]">
      <svg className="block" width="200" height="22" viewBox="0 0 200 22" aria-hidden="true">
        {bars.map((height, i) => (
          <rect key={i} x={14 + i * 4.3} y={11 - height / 2} width="2.5" height={height} rx="1" fill="#adcfa6" />
        ))}
        <circle cx="10" cy="11" r="6" fill="#53bdf8" />
      </svg>
      <div className="mt-[6px] flex items-center justify-between">
        <span className="text-[10px] leading-[15px] text-[#667781]">0:20</span>
        <Meta message={message} />
      </div>
    </div>
  </div>
);

const Header: React.FC = () => (
  <header className="flex h-[60px] shrink-0 items-center bg-[#f0f2f5] text-[#54656f]">
    <svg className="-ml-[3px] shrink-0" width="40" height="40" viewBox="0 0 40 40" role="img" aria-label="Profile photo">
      <circle cx="20" cy="20" r="20" fill="#dfe5e7" />
      <circle cx="20" cy="16" r="7" fill="#fff" />
      <path d="M7 35c1-13 25-13 26 0-8 7-18 7-26 0z" fill="#fff" />
    </svg>
    <div className="ml-[15px] flex-1 pb-px">
      <h1 className="text-[15px] leading-5 text-[#111b21]">~Eng Ahmed Nasr Abroad</h1>
      <p className="text-[12px] leading-5 text-[#667781]">online</p>
    </div>
    <div className="mr-6 flex items-center gap-[26px]">
      <button type="button" aria-label="Labels" className="cursor-pointer">
        <svg width="24" height="24" viewBox="0 0 24 24" fill="currentColor" aria-hidden="true">
          <path d="M17.500 5.700C17.100 5.200 16.500 5 15.900 5H5C3.700 5 2.500 5.900 2.500 7v10c0 1.100 1.200 2 2.500 2h10.900c.6 0 1.200-.3 1.600-.8L22 12z" />
        </svg>
      </button>
      <button type="button" aria-label="Search" className="cursor-pointer">
        <svg width="24" height="24" viewBox="0 0 24 24" fill="currentColor" aria-hidden="true">
          <path d="M15.900 14.300H15l-.3-.3c1-1.100 1.600-2.700 1.600-4.300 0-3.700-3-6.700-6.700-6.700S3 6 3 9.700s3 6.700 6.700 6.700c1.600 0 3.200-.6 4.300-1.600l.3.3v.8l5.100 5.100 1.500-1.500-5-5.200zm-6.200 0c-2.600 0-4.600-2.100-4.600-4.600s2.100-4.600 4.600-4.600 4.600 2.100 4.600 4.600-2 4.600-4.600 4.600z" />
        </svg>
      </button>
      <button type="button" aria-label="Menu" className="cursor-pointer">
        <svg width="24" height="24" viewBox="0 0 24 24" fill="currentColor" aria-hidden="true">
          <circle cx="12" cy="6" r="2" />
          <circle cx="12" cy="12" r="2" />
          <circle cx="12" cy="18" r="2" />
        </svg>
      </button>
    </div>
  </header>
);

const Composer: React.FC = () => (
  <footer className="flex h-[62px] shrink-0 items-center bg-[#f0f2f5] pl-[5px] text-[#54656f]">
    <button type="button" aria-label="Emoji" className="cursor-pointer">
      <svg width="26" height="26" viewBox="0 0 24 24" fill="currentColor" aria-hidden="true">
        <path d="M9.153 11.603c.795 0 1.439-.879 1.439-1.962s-.644-1.962-1.439-1.962-1.439.879-1.439 1.962.644 1.962 1.439 1.962zm-3.204 1.362c-.026-.307-.131 5.218 6.063 5.551 6.066-.25 6.066-5.551 6.066-5.551-6.078 1.416-12.129 0-12.129 0zm11.363 1.108s-.669 1.959-5.051 1.959c-3.505 0-5.388-1.164-5.607-1.959 0 0 5.912 1.055 10.658 0zM11.804 1.011C5.609 1.011.978 6.033.978 12.228s4.826 10.761 11.021 10.761S23.020 18.423 23.020 12.228c.001-6.195-5.021-11.217-11.216-11.217zM12 21.354c-5.273 0-9.381-3.886-9.381-9.159s3.942-9.548 9.215-9.548 9.548 4.275 9.548 9.548c-.001 5.272-4.109 9.159-9.382 9.159zm3.108-9.751c.795 0 1.439-.879 1.439-1.962s-.644-1.962-1.439-1.962-1.439.879-1.439 1.962.644 1.962 1.439 1.962z" />
      </svg>
    </button>
    <button type="button" aria-label="Attach" className="ml-4 cursor-pointer">
      <svg width="24" height="24" viewBox="0 0 24 24" fill="none" stroke="currentColor" strokeWidth="2.5" aria-hidden="true">
        <path d="M12 3v18M3 12h18" />
      </svg>
    </button>
    <div className="ml-4 flex h-[42px] flex-1 items-center rounded-lg bg-white px-[17px]">
      <input
        type="text"
        aria-label="Type a message"
        placeholder="Type a message"
        className="flex-1 bg-transparent text-[14px] text-[#111b21] outline-none placeholder:text-[#667781]"
      />
      <span className="mt-1 size-[6px] rounded-full bg-[#008069]" />
    </div>
    <button type="button" aria-label="Record voice message" className="mr-6 ml-4 cursor-pointer">
      <svg width="24" height="24" viewBox="0 0 24 24" fill="currentColor" aria-hidden="true">
        <path d="M11.999 14.942c2.001 0 3.531-1.530 3.531-3.531V4.350c0-2.001-1.530-3.531-3.531-3.531S8.469 2.350 8.469 4.350v7.061c0 2.001 1.530 3.531 3.530 3.531zm6.238-3.530c0 3.531-2.942 6.002-6.237 6.002s-6.237-2.471-6.237-6.002H3.761c0 4.001 3.178 7.297 7.061 7.885v3.884h2.354v-3.884c3.884-.588 7.061-3.884 7.061-7.885h-2z" />
      </svg>
    </button>
  </footer>
);

const Taskbar: React.FC = () => (
  <div className="flex h-[9px] shrink-0 items-end overflow-hidden bg-[#414040]">
    <span className="ml-[44px] h-[2px] w-[3px] bg-[#d5c536]" />
    <span className="ml-[90px] h-[2px] w-3 rounded-t-full bg-[#c93f30]" />
    <span className="ml-[80px] h-[2px] w-6 bg-[#7fae1c]" />
    <span className="ml-[122px] h-px w-6 bg-[#8a8888]" />
    <span className="ml-[14px] flex h-full w-12 items-end justify-center bg-[#696868]">
      <span className="h-px w-6 bg-[#a04848]" />
    </span>
    <span className="ml-[411px] h-[2px] w-2 rounded-t-full bg-[#a93434]" />
  </div>
);

export default function App() {
  return (
    <div className="flex h-screen flex-col bg-[linear-gradient(to_bottom,#00a884_0,#00a884_113px,#e3e1de_113px,#dadbdd_600px,#cfd5d9_100%)] font-['Segoe_UI','Noto_Sans','DejaVu_Sans',sans-serif]">
      <main className="mt-[5px] mr-[51px] mb-[19px] flex min-h-0 flex-1 flex-col shadow-[0_6px_18px_rgba(11,20,26,0.08)]">
        <Header />
        <section className="relative flex min-h-0 flex-1 overflow-hidden bg-[#79caa6]">
          <Wallpaper />
          <div className="relative flex flex-1 flex-col justify-end pr-[63px] pb-5 pl-11">
            {earlier.map((message) => (
              <Bubble key={message.id} message={message} />
            ))}
            <div className="mt-3 self-center rounded-lg bg-[#fbfefd] px-[11px] py-[6px] text-[12px] leading-5 text-[#54656f] shadow-[0_1px_1px_rgba(11,20,26,0.13)]">
              TODAY
            </div>
            {today.map((message) => (
              <Bubble key={message.id} message={message}>
                {!message.text && <VoiceNote message={message} />}
              </Bubble>
            ))}
          </div>
          <div className="relative flex w-[6px] flex-col justify-end bg-white/10">
            <div className="h-[319px] bg-[#6ba68d]" />
          </div>
        </section>
        <Composer />
      </main>
      <Taskbar />
    </div>
  );
}
